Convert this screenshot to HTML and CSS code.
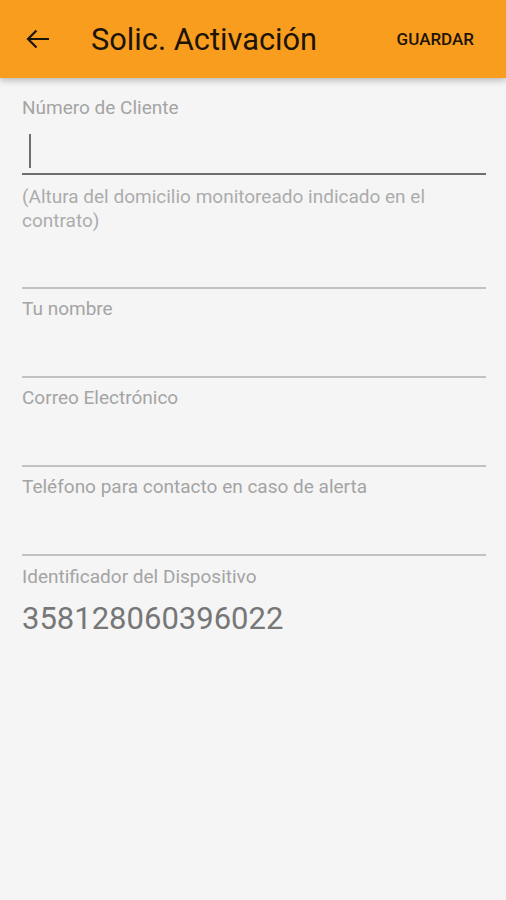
FILE: index.html
```html
<!DOCTYPE html>
<html lang="es">
<head>
<meta charset="utf-8">
<title>Solic. Activación</title>
<link rel="stylesheet" href="styles.css">
</head>
<body>
<header class="appbar">
  <svg class="back" width="24" height="20" viewBox="0 0 24 20" aria-hidden="true">
    <path d="M23 10H2.5M10.5 1.5L2 10l8.5 8.5" fill="none" stroke="#1c1408" stroke-width="2.2"/>
  </svg>
  <h1 class="title">Solic. Activación</h1>
  <span class="action">GUARDAR</span>
</header>
<main class="form">
  <div class="field first">
    <label class="label">Número de Cliente</label>
    <div class="input active"><span class="cursor"></span></div>
  </div>
  <div class="field hintfield">
    <label class="label hint">(Altura del domicilio monitoreado indicado en el contrato)</label>
    <div class="input tall"></div>
  </div>
  <div class="field">
    <label class="label">Tu nombre</label>
    <div class="input"></div>
  </div>
  <div class="field">
    <label class="label">Correo Electrónico</label>
    <div class="input"></div>
  </div>
  <div class="field">
    <label class="label">Teléfono para contacto en caso de alerta</label>
    <div class="input"></div>
  </div>
  <div class="field device">
    <label class="label">Identificador del Dispositivo</label>
    <div class="value">358128060396022</div>
  </div>
</main>
</body>
</html>
```
FILE: styles.css
```css
html, body {
  margin: 0;
  padding: 0;
  background: #f5f5f5;
  font-family: Roboto, "Noto Sans", sans-serif;
}
.appbar {
  height: 78px;
  background: #f89d1d;
  display: flex;
  align-items: center;
  padding: 0 32px 0 26px;
  box-shadow: 0 3px 6px rgba(0,0,0,0.22);
  position: relative;
}
.back {
  flex: none;
  margin-top: -1px;
}
.title {
  margin: 0 0 0 41px;
  font-size: 30.8px;
  font-weight: 400;
  color: #1c1408;
  flex: 1;
}
.action {
  font-size: 17px;
  font-weight: 500;
  color: #1c1408;
}
.form {
  padding: 18px 20px 0 22px;
  display: flex;
  flex-direction: column;
}
.field {
  display: flex;
  flex-direction: column;
  margin-top: 8px;
}
.field.first {
  margin-top: 0;
}
.field.hintfield {
  margin-top: 10px;
}
.field.device {
  margin-top: 9px;
}
.label {
  font-size: 19px;
  color: #a4a4a4;
  line-height: 24px;
}
.hint {
  color: #acacac;
}
.input {
  height: 57px;
  border-bottom: 2px solid #c2c2c2;
  box-sizing: border-box;
}
.input.active {
  height: 55px;
  border-bottom-color: #6e6e6e;
  padding-top: 14px;
}
.input.tall {
  height: 56px;
}
.cursor {
  display: block;
  width: 2px;
  height: 34px;
  margin-left: 7px;
  background: #707070;
}
.value {
  font-size: 31px;
  line-height: 36px;
  color: #777777;
  margin-top: 12px;
}
```
